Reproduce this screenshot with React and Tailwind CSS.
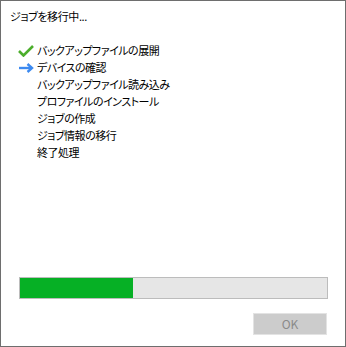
import React from 'react';

const steps = [
  { label: 'バックアップファイルの展開', state: 'done' },
  { label: 'デバイスの確認', state: 'current' },
  { label: 'バックアップファイル読み込み' },
  { label: 'プロファイルのインストール' },
  { label: 'ジョブの作成' },
  { label: 'ジョブ情報の移行' },
  { label: '終了処理' },
];

const CheckIcon = () => (
  <svg width="16" height="12" viewBox="0 0 16 12">
    <path d="M1 6 L5.5 10.5 L15 1" fill="none" stroke="#4cae2c" strokeWidth="2.6" />
  </svg>
);

const ArrowIcon = () => (
  <svg width="16" height="10" viewBox="0 0 16 10">
    <path d="M1 5 H14" stroke="#3d8af0" strokeWidth="2.4" />
    <path d="M9.5 1 L14 5 L9.5 9" fill="none" stroke="#3d8af0" strokeWidth="2.4" />
  </svg>
);

export default function App() {
  return (
    <div
      className="flex h-[347px] w-[346px] flex-col border border-[#6e6e6e] bg-white text-[#000] [font-feature-settings:'palt']"
      style={{ fontFamily: '"Noto Sans CJK JP", "Noto Sans", sans-serif' }}
    >
      <div className="pl-[9px] pt-[7px] text-[11px] leading-[16px] tracking-[-0.4px]">ジョブを移行中...</div>

      <div className="mt-[18px] flex flex-col">
        {steps.map((step) => (
          <div
            key={step.label}
            className="flex h-[17px] items-center pl-[17px] text-[11px] leading-[17px] tracking-[-0.5px]"
          >
            <span className="flex w-[19px] items-center">
              {step.state === 'done' && <CheckIcon />}
              {step.state === 'current' && <ArrowIcon />}
            </span>
            <span>{step.label}</span>
          </div>
        ))}
      </div>

      <div className="mt-auto flex flex-col pb-[11px]">
        <div className="ml-[18px] mr-[17px] flex h-[22px] border border-[#bcbcbc] bg-[#e6e6e6]">
          <div className="h-full w-[113px] bg-[#06b025]" />
        </div>
        <div className="mt-[14px] flex justify-end pr-[18px]">
          <div className="flex h-[22px] w-[74px] items-center justify-center border border-[#e3e3e3] bg-[#cccccc] text-[12px] text-[#8a8a8a]">
            OK
          </div>
        </div>
      </div>
    </div>
  );
}
